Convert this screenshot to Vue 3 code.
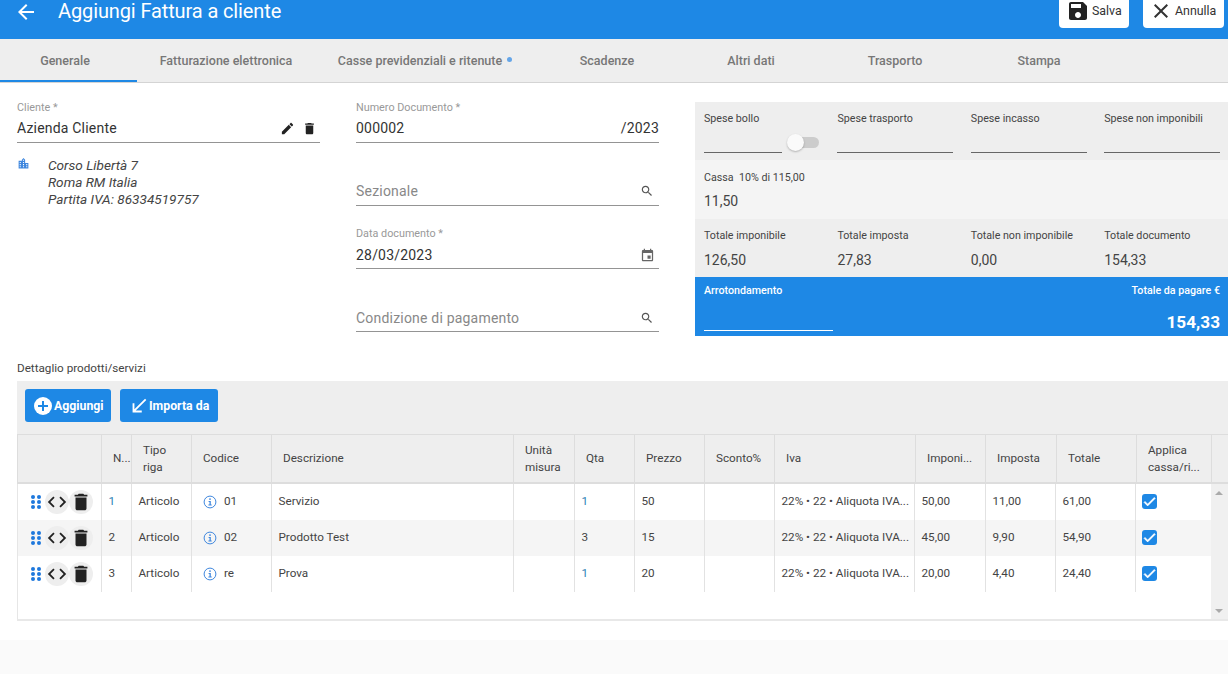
<template>
  <div class="page">
    <header class="topbar">
      <svg class="back" viewBox="0 0 24 24"><path d="M20 11H7.83l5.59-5.59L12 4l-8 8 8 8 1.41-1.41L7.83 13H20v-2z" /></svg>
      <h1 class="title">Aggiungi Fattura a cliente</h1>
      <div class="top-actions">
        <button class="top-btn save">
          <svg viewBox="0 0 24 24"><path d="M17 3H5c-1.11 0-2 .9-2 2v14c0 1.1.89 2 2 2h14c1.1 0 2-.9 2-2V7l-4-4zm-5 16c-1.66 0-3-1.34-3-3s1.34-3 3-3 3 1.34 3 3-1.34 3-3 3zm3-10H5V5h10v4z" /></svg>
          Salva
        </button>
        <button class="top-btn cancel">
          <svg viewBox="0 0 24 24"><path d="M19 6.41L17.59 5 12 10.59 6.41 5 5 6.41 10.59 12 5 17.59 6.41 19 12 13.41 17.59 19 19 17.59 13.41 12z" /></svg>
          Annulla
        </button>
      </div>
    </header>

    <nav class="tabs">
      <div v-for="tab in tabs" :key="tab.label" class="tab" :class="tab.cls">
        {{ tab.label }}<span v-if="tab.dot" class="tab-dot"></span>
      </div>
    </nav>

    <main class="form">
      <div class="col">
        <div class="field">
          <label>Cliente *</label>
          <div class="value">
            <span>Azienda Cliente</span>
            <span class="value-icons">
              <svg viewBox="0 0 24 24"><path d="M3 17.25V21h3.75L17.81 9.94l-3.75-3.75L3 17.25zM20.71 7.04c.39-.39.39-1.02 0-1.41l-2.34-2.34c-.39-.39-1.02-.39-1.41 0l-1.83 1.83 3.75 3.75 1.83-1.83z" /></svg>
              <svg viewBox="0 0 24 24"><path d="M6 19c0 1.1.9 2 2 2h8c1.1 0 2-.9 2-2V7H6v12zM19 4h-3.5l-1-1h-5l-1 1H5v2h14V4z" /></svg>
            </span>
          </div>
        </div>
        <div class="address">
          <svg viewBox="0 0 24 24"><path d="M15 11V5l-3-3-3 3v2H3v14h18V11h-6zm-8 8H5v-2h2v2zm0-4H5v-2h2v2zm0-4H5V9h2v2zm6 8h-2v-2h2v2zm0-4h-2v-2h2v2zm0-4h-2V9h2v2zm0-4h-2V5h2v2zm6 12h-2v-2h2v2zm0-4h-2v-2h2v2z" /></svg>
          <div>
            <div>Corso Libertà 7</div>
            <div>Roma RM Italia</div>
            <div>Partita IVA: 86334519757</div>
          </div>
        </div>
      </div>

      <div class="col col-fields">
        <div class="field">
          <label>Numero Documento *</label>
          <div class="value"><span>000002</span><span>/2023</span></div>
        </div>
        <div class="field">
          <div class="value placeholder">
            <span>Sezionale</span>
            <svg class="search" viewBox="0 0 24 24"><path :d="searchPath" /></svg>
          </div>
        </div>
        <div class="field low">
          <label>Data documento *</label>
          <div class="value">
            <span>28/03/2023</span>
            <svg class="search cal" viewBox="0 0 24 24"><path d="M17 12h-5v5h5v-5zM16 1v2H8V1H6v2H5c-1.11 0-1.99.9-1.99 2L3 19c0 1.1.89 2 2 2h14c1.1 0 2-.9 2-2V5c0-1.1-.9-2-2-2h-1V1h-2zm3 18H5V8h14v11z" /></svg>
          </div>
        </div>
        <div class="field low">
          <div class="value placeholder">
            <span>Condizione di pagamento</span>
            <svg class="search" viewBox="0 0 24 24"><path :d="searchPath" /></svg>
          </div>
        </div>
      </div>

      <aside class="totals">
        <div class="t-row t-inputs">
          <div class="t-cell">
            <span class="t-label">Spese bollo</span>
            <div class="bollo">
              <div class="t-line"></div>
              <div class="toggle"><span class="knob"></span></div>
            </div>
          </div>
          <div v-for="s in spese" :key="s" class="t-cell">
            <span class="t-label">{{ s }}</span>
            <div class="t-line"></div>
          </div>
        </div>
        <div class="t-row t-cassa">
          <div class="t-cell wide">
            <span class="t-label">Cassa&nbsp; 10% di 115,00</span>
            <span class="t-value">11,50</span>
          </div>
        </div>
        <div class="t-row">
          <div v-for="t in totali" :key="t.label" class="t-cell">
            <span class="t-label">{{ t.label }}</span>
            <span class="t-value">{{ t.value }}</span>
          </div>
        </div>
        <div class="t-pay">
          <div class="pay-left">
            <span class="pay-label">Arrotondamento</span>
            <div class="pay-line"></div>
          </div>
          <div class="pay-right">
            <span class="pay-label">Totale da pagare €</span>
            <span class="pay-total">154,33</span>
          </div>
        </div>
      </aside>
    </main>

    <section class="detail">
      <div class="detail-title">Dettaglio prodotti/servizi</div>
      <div class="toolbar">
        <button class="tool-btn add">
          <svg class="plus" viewBox="0 0 18 18">
            <circle cx="9" cy="9" r="9" fill="#fff" />
            <path d="M8 4h2v4h4v2h-4v4H8v-4H4V8h4z" fill="#1e88e5" />
          </svg>
          Aggiungi
        </button>
        <button class="tool-btn import">
          <svg viewBox="0 0 24 24"><path d="M20 5.41L18.59 4 7 15.59V9H5v10h10v-2H8.41z" /></svg>
          Importa da
        </button>
      </div>

      <div class="thead">
        <div v-for="(h, i) in headers" :key="i" class="th">
          <span>{{ h }}</span>
        </div>
      </div>

      <div class="tbody-wrap">
        <div class="tbody">
          <div v-for="r in rows" :key="r.n" class="tr">
            <div class="td td-actions">
              <svg class="drag" viewBox="0 0 10 14">
                <circle cx="2" cy="2" r="2" /><circle cx="8" cy="2" r="2" />
                <circle cx="2" cy="7" r="2" /><circle cx="8" cy="7" r="2" />
                <circle cx="2" cy="12" r="2" /><circle cx="8" cy="12" r="2" />
              </svg>
              <span class="round">
                <svg viewBox="0 0 24 24"><path d="M9.4 16.6L4.8 12l4.6-4.6L8 6l-6 6 6 6 1.4-1.4zm5.2 0l4.6-4.6-4.6-4.6L16 6l6 6-6 6-1.4-1.4z" /></svg>
              </span>
              <span class="round">
                <svg viewBox="0 0 24 24"><path d="M6 19c0 1.1.9 2 2 2h8c1.1 0 2-.9 2-2V7H6v12zM19 4h-3.5l-1-1h-5l-1 1H5v2h14V4z" /></svg>
              </span>
            </div>
            <div class="td" :class="{ tinted: r.n === 1 }"><span>{{ r.n }}</span></div>
            <div class="td"><span>Articolo</span></div>
            <div class="td td-code">
              <svg class="info" viewBox="0 0 14 14">
                <circle cx="7" cy="7" r="5.9" fill="none" stroke="#3f87de" stroke-width="1" />
                <circle cx="7" cy="4.1" r="0.9" fill="#3f87de" />
                <path d="M5.6 6h2.2v3.6h0.9v0.9H5.4v-0.9h1.1V6.9h-0.9z" fill="#3f87de" />
              </svg>
              <span>{{ r.code }}</span>
            </div>
            <div class="td"><span>{{ r.desc }}</span></div>
            <div class="td"></div>
            <div class="td" :class="{ tinted: r.qta === 1 }"><span>{{ r.qta }}</span></div>
            <div class="td"><span>{{ r.price }}</span></div>
            <div class="td"></div>
            <div class="td"><span>22% • 22 • Aliquota IVA...</span></div>
            <div class="td"><span>{{ r.base }}</span></div>
            <div class="td"><span>{{ r.tax }}</span></div>
            <div class="td"><span>{{ r.total }}</span></div>
            <div class="td td-check">
              <span class="check">
                <svg viewBox="0 0 24 24"><path d="M9 16.2L4.8 12l-1.4 1.4L9 19 21 7l-1.4-1.4z" /></svg>
              </span>
            </div>
          </div>
        </div>
        <div class="scroll">
          <span class="arrow up"></span>
          <span class="arrow down"></span>
        </div>
      </div>
    </section>

    <footer class="foot"></footer>
  </div>
</template>

<script setup>
const searchPath = 'M15.5 14h-.79l-.28-.27C15.41 12.59 16 11.11 16 9.5 16 5.91 13.09 3 9.5 3S3 5.91 3 9.5 5.91 16 9.5 16c1.61 0 3.09-.59 4.23-1.57l.27.28v.79l5 4.99L20.49 19l-4.99-5zm-6 0C7.01 14 5 11.99 5 9.5S7.01 5 9.5 5 14 7.01 14 9.5 11.99 14 9.5 14z'

const tabs = [
  { label: 'Generale', cls: 'active' },
  { label: 'Fatturazione elettronica', cls: 'w178' },
  { label: 'Casse previdenziali e ritenute', cls: 'w220', dot: true },
  { label: 'Scadenze' },
  { label: 'Altri dati' },
  { label: 'Trasporto' },
  { label: 'Stampa' }
]

const spese = ['Spese trasporto', 'Spese incasso', 'Spese non imponibili']

const totali = [
  { label: 'Totale imponibile', value: '126,50' },
  { label: 'Totale imposta', value: '27,83' },
  { label: 'Totale non imponibile', value: '0,00' },
  { label: 'Totale documento', value: '154,33' }
]

const headers = ['', 'N...', 'Tipo riga', 'Codice', 'Descrizione', 'Unità misura', 'Qta', 'Prezzo', 'Sconto%', 'Iva', 'Imponi...', 'Imposta', 'Totale', 'Applica cassa/ri...', '']

const rows = [
  { n: 1, code: '01', desc: 'Servizio', qta: 1, price: 50, base: '50,00', tax: '11,00', total: '61,00' },
  { n: 2, code: '02', desc: 'Prodotto Test', qta: 3, price: 15, base: '45,00', tax: '9,90', total: '54,90' },
  { n: 3, code: 're', desc: 'Prova', qta: 1, price: 20, base: '20,00', tax: '4,40', total: '24,40' }
]
</script>

<style>
body {
  overflow: hidden;
}
</style>

<style scoped>
.page {
  width: 1228px;
  height: 674px;
  overflow: hidden;
  background: #fff;
  color: #333;
  font-family: Roboto, "Liberation Sans", sans-serif;
  display: flex;
  flex-direction: column;
}

.topbar {
  height: 39px;
  flex: none;
  background: #1e88e5;
  display: flex;
  align-items: flex-start;
  color: #fff;
}
.back {
  width: 24px;
  height: 24px;
  margin-left: 14px;
  fill: #fff;
}
.title {
  margin: 0 0 0 20px;
  font-size: 20px;
  font-weight: 400;
  line-height: 23px;
  letter-spacing: -0.12px;
}
.top-actions {
  margin-left: auto;
  margin-right: 4px;
  display: flex;
  gap: 14px;
}
.top-btn {
  height: 28px;
  padding: 0;
  border: 0;
  border-radius: 0 0 4px 4px;
  background: #fff;
  color: #333;
  font: 400 12.4px Roboto, sans-serif;
  display: flex;
  align-items: flex-start;
  line-height: 22px;
}
.top-btn svg {
  width: 24px;
  height: 24px;
  margin-top: -1px;
}
.save {
  width: 70px;
  padding-left: 7px;
  gap: 2px;
}
.save svg {
  fill: #222;
}
.cancel {
  width: 81px;
  padding-left: 6px;
  gap: 2px;
}
.cancel svg {
  fill: #333;
}

.tabs {
  height: 44px;
  flex: none;
  background: #eee;
  border-bottom: 1px solid #d4d4d4;
  box-sizing: border-box;
  display: flex;
}
.tab {
  width: 144px;
  height: 43px;
  box-sizing: border-box;
  display: flex;
  align-items: center;
  justify-content: center;
  font-size: 12.5px;
  font-weight: 500;
  color: #777;
  position: relative;
}
.tab.active {
  width: 137px;
  padding-right: 7px;
  border-bottom: 2px solid #1e88e5;
  padding-top: 2px;
}
.w178 {
  width: 178px;
}
.w220 {
  width: 220px;
}
.tab-dot {
  width: 5px;
  height: 5px;
  border-radius: 50%;
  background: #64a5e8;
  margin: 0 0 2px 5px;
}

.form {
  flex: none;
  display: grid;
  grid-template-columns: 303px 303px 533px;
  column-gap: 36px;
  padding: 19px 0 0 17px;
  height: 253px;
  box-sizing: border-box;
}
.col-fields {
  display: flex;
  flex-direction: column;
  gap: 22px;
}
.field {
  height: 41px;
  box-sizing: border-box;
  border-bottom: 1px solid #949494;
  display: flex;
  flex-direction: column;
  justify-content: flex-end;
}
.field label {
  font-size: 10.8px;
  line-height: 12px;
  color: #999;
  margin-bottom: 5px;
}
.value {
  height: 24px;
  display: flex;
  justify-content: space-between;
  align-items: center;
  font-size: 14px;
  letter-spacing: 0.2px;
  color: #333;
  padding-bottom: 5px;
  box-sizing: border-box;
}
.low .value {
  padding-bottom: 3px;
}
.placeholder {
  color: #888;
}
.value-icons {
  display: flex;
  gap: 7px;
  padding-right: 3px;
}
.value-icons svg {
  width: 15px;
  height: 15px;
  fill: #222;
}
.search {
  width: 14px;
  height: 14px;
  fill: #555;
  margin-right: 5px;
}
.cal {
  width: 15px;
  height: 15px;
  margin-right: 4px;
  fill: #666;
}
.address {
  display: flex;
  margin-top: 14px;
  font-size: 13.6px;
  font-style: italic;
  line-height: 17px;
  color: #444;
}
.address svg {
  width: 13px;
  height: 13px;
  fill: #3f87de;
  margin: 0 18px 0 0;
  flex: none;
}

.totals {
  height: 234px;
  display: flex;
  flex-direction: column;
}
.t-row {
  height: 58px;
  background: #eee;
  display: flex;
  padding-left: 9px;
}
.t-cassa {
  height: 59px;
  background: #f4f4f4;
}
.t-cell {
  flex: none;
  width: 116px;
  margin-right: 17.4px;
  padding-top: 11px;
  box-sizing: border-box;
  display: flex;
  flex-direction: column;
}
.t-cassa .t-cell {
  padding-top: 12px;
}
.t-cassa .t-value {
  margin-top: 9px;
}
.t-cell.wide {
  width: 300px;
}
.t-label {
  font-size: 10.7px;
  line-height: 12px;
  color: #444;
}
.t-value {
  font-size: 14px;
  line-height: 16px;
  margin-top: 10px;
  color: #444;
}
.t-line {
  height: 1px;
  background: #666;
  margin-top: 27px;
}
.bollo {
  position: relative;
}
.bollo .t-line {
  width: 78px;
}
.toggle {
  position: absolute;
  left: 92px;
  top: 12px;
  width: 23px;
  height: 11px;
  border-radius: 6px;
  background: #ccc;
}
.knob {
  position: absolute;
  left: -9px;
  top: -3px;
  width: 17px;
  height: 17px;
  border-radius: 50%;
  background: #fafafa;
  box-shadow: 0 1px 2px rgba(0, 0, 0, 0.25);
}
.t-pay {
  height: 59px;
  background: #1e88e5;
  color: #fff;
  display: flex;
  justify-content: space-between;
  padding: 8px 8px 4px 9px;
  box-sizing: border-box;
}
.pay-label {
  font-size: 10.7px;
  font-weight: 500;
  line-height: 12px;
}
.pay-left {
  width: 129px;
  display: flex;
  flex-direction: column;
  justify-content: space-between;
  padding-bottom: 1px;
}
.pay-line {
  height: 1px;
  background: #fff;
}
.pay-right {
  display: flex;
  flex-direction: column;
  align-items: flex-end;
  justify-content: space-between;
}
.pay-total {
  font-size: 17.2px;
  font-weight: 700;
  line-height: 20px;
}

.detail {
  flex: none;
  padding: 25px 0 0 17px;
}
.detail-title {
  font-size: 11.7px;
  line-height: 14px;
  color: #444;
  margin-bottom: 6px;
}
.toolbar {
  height: 53px;
  box-sizing: border-box;
  background: #eee;
  padding: 8px;
  display: flex;
  gap: 9px;
}
.tool-btn {
  height: 33px;
  padding: 0;
  border: 0;
  border-radius: 3px;
  background: #1e88e5;
  color: #fff;
  font: 700 12.3px Roboto, sans-serif;
  display: flex;
  align-items: center;
}
.add {
  width: 86px;
  padding-left: 9px;
  gap: 2px;
}
.plus {
  width: 18px;
  height: 18px;
}
.import {
  width: 98px;
  padding-left: 9px;
  gap: 0;
}
.import svg {
  width: 20px;
  height: 20px;
  fill: #fff;
  transform: scale(1.1);
}

.thead {
  display: grid;
  grid-template-columns: 85px 30px 60px 80px 242px 61px 60px 70px 70px 141px 70px 71px 80px 75px 16px;
  height: 50px;
  box-sizing: border-box;
  background: #eee;
  border-top: 1px solid #ddd;
  border-bottom: 2px solid #ddd;
}
.th {
  box-sizing: border-box;
  border-right: 1px solid #ddd;
  padding: 0 8px 0 11px;
  display: flex;
  align-items: center;
  font-size: 11.7px;
  line-height: 17px;
  color: #444;
  overflow: hidden;
}
.th:first-child {
  border-left: 1px solid #ddd;
}
.th:last-child {
  border-right: 0;
}
.tbody-wrap {
  display: flex;
  height: 137px;
  box-sizing: border-box;
  border-left: 1px solid #e6e6e6;
  border-bottom: 2px solid #e8e8e8;
}
.tbody {
  width: 1193px;
}
.tr {
  display: grid;
  grid-template-columns: 84px 30px 60px 80px 242px 61px 60px 70px 70px 140px 71px 70px 80px 75px;
  height: 36px;
}
.tr:nth-child(2) {
  background: #f5f5f5;
}
.td {
  box-sizing: border-box;
  border-right: 1px solid #e2e2e2;
  padding: 0 0 2px 6.5px;
  display: flex;
  align-items: center;
  font-size: 11.7px;
  color: #444;
  white-space: nowrap;
  overflow: hidden;
}
.tinted {
  color: #2f7fb5;
}
.td-actions {
  padding: 0 0 0 13px;
}
.drag {
  width: 10px;
  height: 14px;
  fill: #1e78dc;
  margin-right: 4px;
  flex: none;
}
.round {
  width: 24px;
  height: 24px;
  border-radius: 50%;
  background: #eee;
  display: flex;
  align-items: center;
  justify-content: center;
  flex: none;
}
.round svg {
  width: 22px;
  height: 22px;
  fill: #222;
  flex: none;
}
.td-code {
  padding-left: 11px;
  gap: 7px;
}
.info {
  width: 14px;
  height: 14px;
  margin-top: 1px;
  flex: none;
}
.td-check {
  padding: 0 0 1px 6px;
  border-right: 0;
}
.check {
  width: 15px;
  height: 15px;
  border-radius: 3px;
  background: #1e88e5;
  display: flex;
}
.check svg {
  width: 15px;
  height: 15px;
  fill: #fff;
  stroke: #fff;
  stroke-width: 1.2;
}
.scroll {
  width: 17px;
  background: #f0f0f0;
  position: relative;
  height: 135px;
}
.arrow {
  position: absolute;
  left: 4px;
  width: 0;
  height: 0;
  border-left: 4px solid transparent;
  border-right: 4px solid transparent;
}
.up {
  top: 7px;
  border-bottom: 4px solid #aaa;
}
.down {
  bottom: 6px;
  border-top: 4px solid #aaa;
}

.foot {
  margin-top: 19px;
  flex: 1;
  background: #fafafa;
}
</style>
